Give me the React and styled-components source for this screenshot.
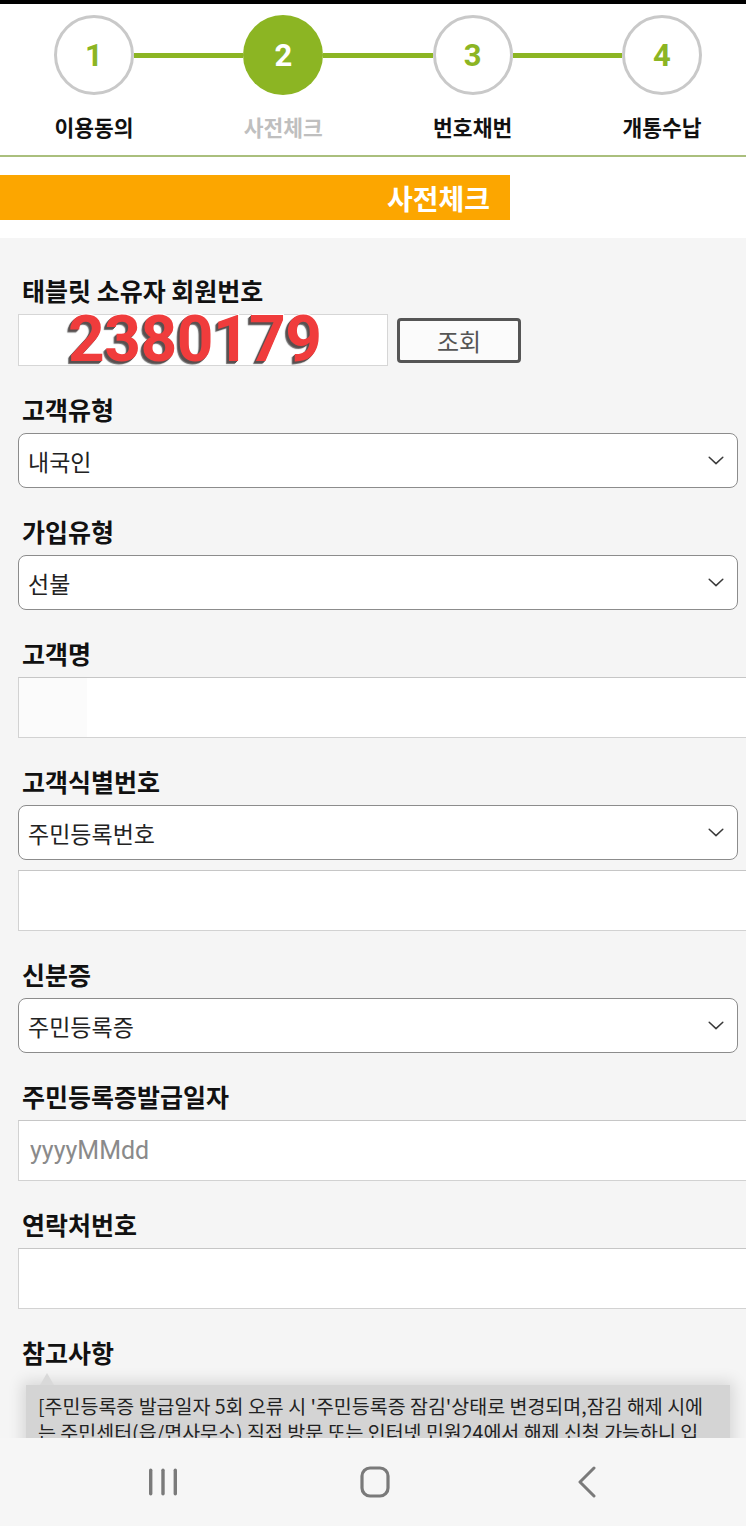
import React from 'react';
import styled, { createGlobalStyle } from 'styled-components';

const GREEN = '#8cb523';

const Global = createGlobalStyle`
  html, body { margin: 0; padding: 0; }
  body {
    background: #f5f5f5;
    font-family: "Noto Sans CJK KR", "Noto Sans", sans-serif;
    overflow: hidden;
  }
  * { box-sizing: border-box; }
`;

const Page = styled.div`
  width: 746px;
  height: 1526px;
  overflow: hidden;
  background: #f5f5f5;
`;

const TopStrip = styled.div`
  height: 4px;
  background: #000;
`;

const Header = styled.header`
  background: #fff;
  height: 153px;
  border-bottom: 2px solid #aabf7d;
  padding: 11px 44px 0 54px;
`;

const StepRow = styled.div`
  display: flex;
  align-items: center;
`;

const Circle = styled.div`
  width: 80px;
  height: 80px;
  flex: none;
  border-radius: 50%;
  border: ${(p) => (p.$active ? 'none' : '3px solid #c9c9c9')};
  background: ${(p) => (p.$active ? GREEN : '#fff')};
  color: ${(p) => (p.$active ? '#fff' : GREEN)};
  display: flex;
  align-items: center;
  justify-content: center;
  font-family: Roboto, "Liberation Sans", sans-serif;
  font-weight: 700;
  font-size: 31px;
`;

const Connector = styled.div`
  flex: 1;
  height: 5px;
  background: ${GREEN};
`;

const LabelRow = styled.div`
  display: flex;
  justify-content: space-between;
  margin-top: 18px;
`;

const StepLabel = styled.div`
  width: 80px;
  display: flex;
  justify-content: center;
  white-space: nowrap;
  font-size: 21.5px;
  line-height: 28px;
  font-weight: 700;
  color: ${(p) => (p.$active ? '#bfbfbf' : '#111')};
`;

const TitleBand = styled.div`
  background: #fff;
  padding: 18px 0;
`;

const TitleBar = styled.div`
  width: 510px;
  height: 45px;
  background: #fca600;
  display: flex;
  align-items: center;
  justify-content: flex-end;
  padding-right: 20px;
  color: #fff;
  font-size: 28px;
  font-weight: 700;
`;

const Form = styled.div`
  padding: 36px 0 0 18px;
`;

const Group = styled.div`
  margin-bottom: 27px;
`;

const Label = styled.div`
  height: 32px;
  line-height: 32px;
  margin: 0 0 8px 4px;
  font-size: 25px;
  font-weight: 700;
  color: #111;
`;

const MemberRow = styled.div`
  display: flex;
  align-items: center;
  gap: 9px;
`;

const MemberBox = styled.div`
  width: 370px;
  height: 52px;
  background: #fff;
  border: 1px solid #d6d6d6;
  padding-left: 49px;
  display: flex;
  align-items: center;
  font-family: Roboto, "Liberation Sans", sans-serif;
  font-weight: 700;
  font-size: 64px;
  line-height: 1;
  letter-spacing: -0.5px;
  color: #f03c3c;
  text-shadow: -1px 1px 0 #5a5050, -2px 2px 0 #5a5050, -3px 3px 1px #6b6b6b,
    1px -1px 0 #fff;
`;

const LookupButton = styled.button`
  width: 124px;
  height: 45px;
  border: 3px solid #555;
  border-radius: 4px;
  background: #fbfbfb;
  color: #555;
  font-family: "Noto Sans CJK KR", sans-serif;
  font-size: 24px;
  padding: 0;
`;

const SelectBox = styled.div`
  width: 720px;
  height: 55px;
  background: #fff;
  border: 1.5px solid #8c8c8c;
  border-radius: 8px;
  display: flex;
  align-items: center;
  justify-content: space-between;
  padding: 0 13px 0 9px;
  font-size: 23px;
  color: #222;
`;

const TextInput = styled.input`
  display: block;
  width: 745px;
  height: 61px;
  margin: ${(p) => (p.$stacked ? '10px 0 0' : '0')};
  border: 1px solid #d2d2d2;
  border-top-color: #c6c6c6;
  border-right: none;
  border-radius: 0;
  background: ${(p) =>
    p.$masked
      ? 'linear-gradient(90deg, #fbfbfb 0 68px, #fff 68px)'
      : '#fff'};
  padding: 0 0 0 11px;
  font-family: Roboto, "Liberation Sans", sans-serif;
  font-size: 25px;
  color: #222;
  outline: none;
  &::placeholder {
    color: #8a8a8a;
  }
`;

const Notice = styled.div`
  position: relative;
  margin: 17px 0 0 8px;
  width: 704px;
  background: #d4d4d4;
  box-shadow: 0 0 14px 4px rgba(0, 0, 0, 0.12);
  padding: 8px 12px;
  font-size: 19.5px;
  line-height: 26px;
  color: #222;
  &::before {
    content: '';
    position: absolute;
    left: 14px;
    top: -12px;
    border-left: 7px solid transparent;
    border-right: 7px solid transparent;
    border-bottom: 12px solid #d9d9d9;
  }
`;

const NoticeLine = styled.div`
  white-space: nowrap;
`;

const NavBar = styled.nav`
  position: fixed;
  left: 0;
  right: 0;
  bottom: 0;
  height: 88px;
  background: #f6f6f6;
  display: grid;
  grid-template-columns: repeat(3, 212px);
  justify-content: center;
  align-items: center;
  padding-left: 4px;
`;

const NavCell = styled.div`
  display: flex;
  justify-content: center;
  align-items: center;
`;

const Chevron = () => (
  <svg width="16" height="9" viewBox="0 0 16 9" fill="none">
    <polyline points="1.2,1.2 8,7.6 14.8,1.2" stroke="#3a3a3a" strokeWidth="1.5" strokeLinecap="round" strokeLinejoin="round" />
  </svg>
);

const Select = ({ children }) => (
  <SelectBox>
    <span>{children}</span>
    <Chevron />
  </SelectBox>
);

const steps = [
  { n: 1, label: '이용동의' },
  { n: 2, label: '사전체크', active: true },
  { n: 3, label: '번호채번' },
  { n: 4, label: '개통수납' },
];

export default function App() {
  return (
    <Page>
      <Global />
      <TopStrip />
      <Header>
        <StepRow>
          {steps.map((s, i) => (
            <React.Fragment key={s.n}>
              {i > 0 && <Connector />}
              <Circle $active={s.active}>{s.n}</Circle>
            </React.Fragment>
          ))}
        </StepRow>
        <LabelRow>
          {steps.map((s) => (
            <StepLabel key={s.n} $active={s.active}>
              {s.label}
            </StepLabel>
          ))}
        </LabelRow>
      </Header>
      <TitleBand>
        <TitleBar>사전체크</TitleBar>
      </TitleBand>
      <Form>
        <Group>
          <Label>태블릿 소유자 회원번호</Label>
          <MemberRow>
            <MemberBox>2380179</MemberBox>
            <LookupButton>조회</LookupButton>
          </MemberRow>
        </Group>
        <Group>
          <Label>고객유형</Label>
          <Select>내국인</Select>
        </Group>
        <Group>
          <Label>가입유형</Label>
          <Select>선불</Select>
        </Group>
        <Group>
          <Label>고객명</Label>
          <TextInput $masked readOnly />
        </Group>
        <Group>
          <Label>고객식별번호</Label>
          <Select>주민등록번호</Select>
          <TextInput $stacked readOnly />
        </Group>
        <Group>
          <Label>신분증</Label>
          <Select>주민등록증</Select>
        </Group>
        <Group>
          <Label>주민등록증발급일자</Label>
          <TextInput placeholder="yyyyMMdd" readOnly />
        </Group>
        <Group>
          <Label>연락처번호</Label>
          <TextInput readOnly />
        </Group>
        <div>
          <Label>참고사항</Label>
          <Notice>
            <NoticeLine>[주민등록증 발급일자 5회 오류 시 '주민등록증 잠김'상태로 변경되며,잠김 해제 시에</NoticeLine>
            <NoticeLine>는 주민센터(읍/면사무소) 직접 방문 또는 인터넷 민원24에서 해제 신청 가능하니 입</NoticeLine>
          </Notice>
        </div>
      </Form>
      <NavBar>
        <NavCell>
          <svg width="30" height="30" viewBox="0 0 30 30">
            <rect x="1" y="1.5" width="3.4" height="27" rx="1.7" fill="#7a7a7a" />
            <rect x="13.3" y="1.5" width="3.4" height="27" rx="1.7" fill="#7a7a7a" />
            <rect x="25.6" y="1.5" width="3.4" height="27" rx="1.7" fill="#7a7a7a" />
          </svg>
        </NavCell>
        <NavCell>
          <svg width="30" height="32" viewBox="0 0 30 32">
            <rect x="2" y="2" width="26" height="28" rx="8" fill="none" stroke="#7a7a7a" strokeWidth="3.2" />
          </svg>
        </NavCell>
        <NavCell>
          <svg width="22" height="32" viewBox="0 0 22 32">
            <polyline points="18,2 4,16 18,30" fill="none" stroke="#7a7a7a" strokeWidth="3" strokeLinecap="round" strokeLinejoin="round" />
          </svg>
        </NavCell>
      </NavBar>
    </Page>
  );
}
